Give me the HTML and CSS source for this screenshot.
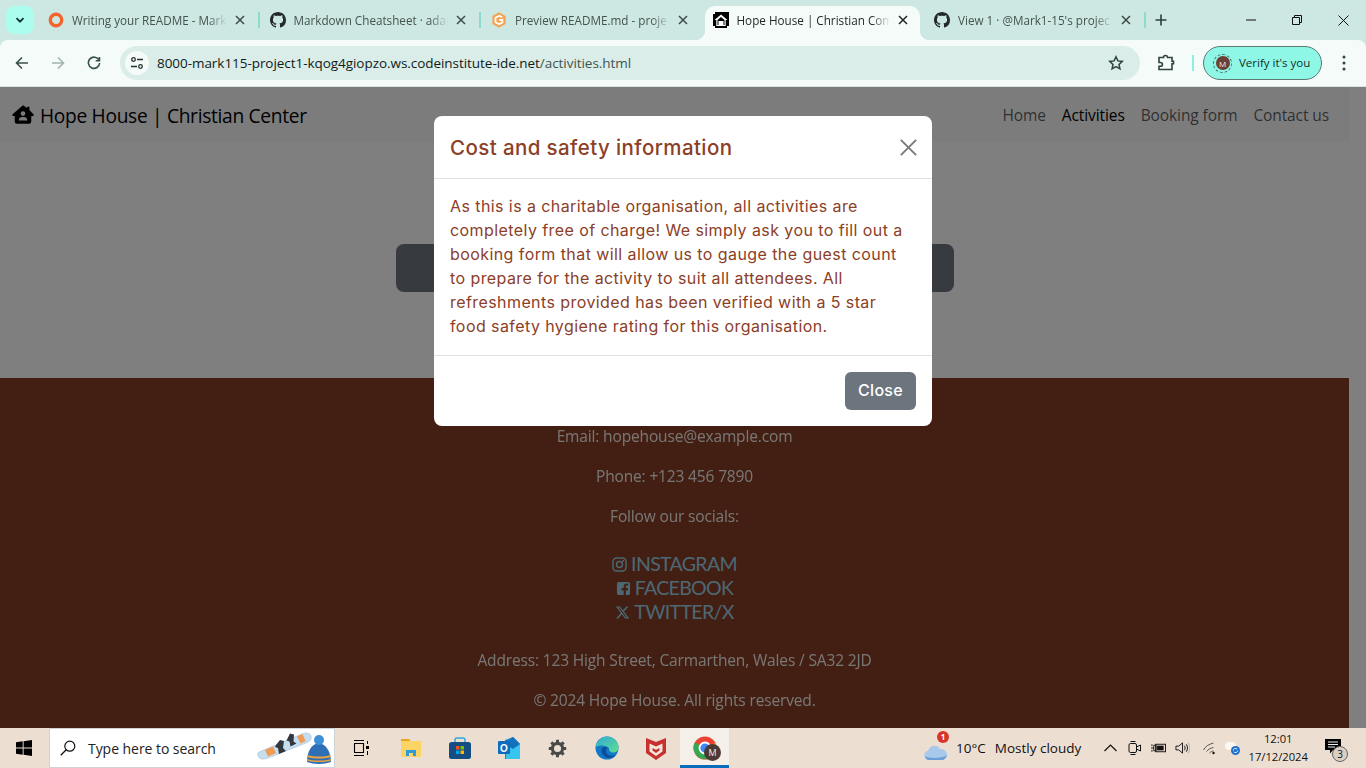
FILE: index.html
```html
<!DOCTYPE html>
<html lang="en">
<head>
<meta charset="utf-8">
<title>Hope House | Christian Center</title>
<link rel="stylesheet" href="styles.css">
</head>
<body>
<div class="tabstrip">
  <button class="tab-search"><svg class="ic10" viewBox="0 0 10 10"><path d="M1.5 3.2 5 6.7l3.5-3.5" fill="none" stroke="#14302b" stroke-width="1.8"/></svg></button>
  <div class="tab sep">
    <svg class="fav" viewBox="0 0 16 16"><circle cx="8" cy="8" r="5.7" fill="none" stroke="#f4622d" stroke-width="3.4"/></svg>
    <span class="tab-title">Writing your README - Mark</span>
    <svg class="tab-x" viewBox="0 0 10 10"><path d="M1 1l8 8M9 1l-8 8"/></svg>
  </div>
  <div class="tab sep">
    <svg class="fav" viewBox="0 0 16 16"><path fill="#24292f" d="M8 0C3.58 0 0 3.58 0 8c0 3.54 2.29 6.53 5.47 7.59.4.07.55-.17.55-.38 0-.19-.01-.82-.01-1.49-2.01.37-2.53-.49-2.69-.94-.09-.23-.48-.94-.82-1.13-.28-.15-.68-.52-.01-.53.63-.01 1.08.58 1.23.82.72 1.21 1.87.87 2.33.66.07-.52.28-.87.51-1.07-1.78-.2-3.64-.89-3.64-3.95 0-.87.31-1.59.82-2.15-.08-.2-.36-1.02.08-2.12 0 0 .67-.21 2.2.82.64-.18 1.32-.27 2-.27.68 0 1.36.09 2 .27 1.53-1.04 2.2-.82 2.2-.82.44 1.1.16 1.92.08 2.12.51.56.82 1.27.82 2.15 0 3.07-1.87 3.75-3.65 3.95.29.25.54.73.54 1.48 0 1.07-.01 1.93-.01 2.2 0 .21.15.46.55.38A8.013 8.013 0 0016 8c0-4.42-3.58-8-8-8z"/></svg>
    <span class="tab-title">Markdown Cheatsheet · adam</span>
    <svg class="tab-x" viewBox="0 0 10 10"><path d="M1 1l8 8M9 1l-8 8"/></svg>
  </div>
  <div class="tab">
    <svg class="fav" viewBox="0 0 16 16"><path fill="#f5a350" d="M8 .3l6.6 3.6v8.2L8 15.7 1.4 12.100V3.900z"/><path fill="none" stroke="#fff" stroke-width="1.8" d="M11.300 5.300 8.200 3.800 4.500 5.700v4.600l3.600 2 3.300-1.900V7.900H8.100"/></svg>
    <span class="tab-title">Preview README.md - proje</span>
    <svg class="tab-x" viewBox="0 0 10 10"><path d="M1 1l8 8M9 1l-8 8"/></svg>
  </div>
  <div class="tab tab-active">
    <svg class="fav" viewBox="0 0 16 16"><rect width="16" height="16" fill="#000"/><path fill="#fff" d="M8 2.500 1.500 8h1.800v6h9.400V8h1.800z"/><path fill="#000" d="M4.500 8 8 4.900 11.500 8v5h-7z"/><path fill="#fff" d="M5.500 9h5v4h-5z"/><path fill="#fff" d="M0 0h2v2H0zM14 14h2v2h-2zM0 14h2v2H0z"/></svg>
    <span class="tab-title">Hope House | Christian Com</span>
    <svg class="tab-x" viewBox="0 0 10 10"><path d="M1 1l8 8M9 1l-8 8"/></svg>
  </div>
  <div class="tab sep">
    <svg class="fav" viewBox="0 0 16 16"><path fill="#24292f" d="M8 0C3.58 0 0 3.58 0 8c0 3.54 2.29 6.53 5.47 7.59.4.07.55-.17.55-.38 0-.19-.01-.82-.01-1.49-2.01.37-2.53-.49-2.69-.94-.09-.23-.48-.94-.82-1.13-.28-.15-.68-.52-.01-.53.63-.01 1.08.58 1.23.82.72 1.21 1.87.87 2.33.66.07-.52.28-.87.51-1.07-1.78-.2-3.64-.89-3.64-3.95 0-.87.31-1.59.82-2.15-.08-.2-.36-1.02.08-2.12 0 0 .67-.21 2.2.82.64-.18 1.32-.27 2-.27.68 0 1.36.09 2 .27 1.53-1.04 2.2-.82 2.2-.82.44 1.1.16 1.92.08 2.12.51.56.82 1.27.82 2.15 0 3.07-1.87 3.75-3.65 3.95.29.25.54.73.54 1.48 0 1.07-.01 1.93-.01 2.2 0 .21.15.46.55.38A8.013 8.013 0 0016 8c0-4.42-3.58-8-8-8z"/></svg>
    <span class="tab-title">View 1 · @Mark1-15's projec</span>
    <svg class="tab-x" viewBox="0 0 10 10"><path d="M1 1l8 8M9 1l-8 8"/></svg>
  </div>
  <svg class="new-tab" viewBox="0 0 12 12"><path d="M6 .5v11M.5 6h11" stroke="#2b3f3b" stroke-width="1.600" fill="none"/></svg>
  <div class="win-controls">
    <div class="win-btn"><svg class="ic10" viewBox="0 0 10 10"><path d="M0 5h10" stroke="#111" fill="none"/></svg></div>
    <div class="win-btn"><svg class="ic10" viewBox="0 0 10 10"><path d="M.5 2.500h7v7h-7zM2.500 2.500v-2h7v7h-2" stroke="#111" fill="none"/></svg></div>
    <div class="win-btn"><svg class="ic11" viewBox="0 0 11 11"><path d="M.5.500l10 10M10.500.500l-10 10" stroke="#111" fill="none"/></svg></div>
  </div>
</div>

<div class="toolbar">
  <div class="nav-btn"><svg class="ic14" viewBox="0 0 14 14"><path d="M13 7H2M7 1.500 1.500 7 7 12.500" fill="none" stroke="#37504b" stroke-width="1.600"/></svg></div>
  <div class="nav-btn"><svg class="ic14" viewBox="0 0 14 14"><path d="M1 7h11M7 1.500 12.500 7 7 12.500" fill="none" stroke="#a3b3af" stroke-width="1.600"/></svg></div>
  <div class="nav-btn"><svg class="ic14" viewBox="0 0 14 14"><path d="M12 4.200A5.600 5.600 0 1 0 12.600 7M12.500 1v3.800H8.700" fill="none" stroke="#37504b" stroke-width="1.600"/></svg></div>
  <div class="omnibox">
    <div class="site-info"><svg class="ic14" viewBox="0 0 14 14"><g fill="none" stroke="#22332f" stroke-width="1.300"><circle cx="3.500" cy="3.500" r="1.800"/><path d="M7 3.500h6M1 10.500h6"/><circle cx="10.500" cy="10.500" r="1.800"/></g></svg></div>
    <div class="url">8000-mark115-project1-kqog4giopzo.ws.codeinstitute-ide.net<span class="url-path">/activities.html</span></div>
    <svg class="star" viewBox="0 0 16 16"><path d="M8 1.800l1.900 4.100 4.400.5-3.300 3 .9 4.400L8 11.600l-3.900 2.200.9-4.400-3.300-3 4.400-.5z" fill="none" stroke="#2d4440" stroke-width="1.500"/></svg>
  </div>
  <svg class="ext" viewBox="0 0 18 18"><path d="M2 4h4.500a2 2 0 0 1 4 0H15v3.700h1.500v2.600H15V16H2v-3.200h1.500a1.900 1.900 0 0 0 0-3.800H2z" transform="translate(0 -.5)" fill="none" stroke="#2d4440" stroke-width="1.600"/></svg>
  <div class="tool-sep"></div>
  <div class="verify">
    <span class="avatar-ring"><span class="avatar">M</span></span>
    <span>Verify it's you</span>
  </div>
  <svg class="kebab" viewBox="0 0 4 16"><g fill="#2d4440"><circle cx="2" cy="2" r="1.500"/><circle cx="2" cy="8" r="1.500"/><circle cx="2" cy="14" r="1.500"/></g></svg>
</div>

<div class="viewport">
  <div class="page">
    <nav class="navbar">
      <a class="brand">
        <svg class="brand-ic" viewBox="0 0 24 20"><path d="M12 0 .6 9.700c-.7.600-.3 1.800.7 1.800H3v6A2.500 2.500 0 0 0 5.500 20h13a2.500 2.500 0 0 0 2.500-2.500v-6h1.700c1 0 1.400-1.200.7-1.800L19 5V1.500h-2.500v1.400z"/><circle cx="12" cy="9" r="2.500" fill="#f8f9fa"/><path d="M7.300 16.500c0-2.400 2-3.700 3.500-3.700h2.400c1.500 0 3.500 1.300 3.500 3.700z" fill="#f8f9fa"/></svg>
        <span>Hope House | Christian Center</span>
      </a>
      <ul class="nav-links">
        <li>Home</li>
        <li class="current">Activities</li>
        <li>Booking form</li>
        <li>Contact us</li>
      </ul>
    </nav>
    <main class="main">
      <div class="dark-bar"></div>
    </main>
    <footer class="footer">
      <p>Email: hopehouse@example.com</p>
      <p>Phone: +123 456 7890</p>
      <p>Follow our socials:</p>
      <div class="socials">
        <a><svg class="soc-ic" viewBox="0 0 16 16"><rect x="1" y="1" width="14" height="14" rx="4" fill="none" stroke="currentColor" stroke-width="1.500"/><circle cx="8" cy="8" r="3.200" fill="none" stroke="currentColor" stroke-width="1.500"/><circle cx="12" cy="4" r="1" fill="currentColor"/></svg>INSTAGRAM</a>
        <a><svg class="soc-ic" viewBox="0 0 16 16"><path fill="currentColor" d="M3 1h10a2 2 0 0 1 2 2v10a2 2 0 0 1-2 2h-2.500v-5h2l.4-2.500h-2.400V6c0-.8.400-1.200 1.200-1.200h1.200V2.700c-2.800-.5-4.700.3-4.700 3v1.800H6V10h2.200v5H3a2 2 0 0 1-2-2V3a2 2 0 0 1 2-2z"/></svg>FACEBOOK</a>
        <a><svg class="soc-ic" viewBox="0 0 24 24"><path fill="currentColor" d="M18.244 2.250h3.308l-7.227 8.260 8.502 11.240H16.170l-5.214-6.817L4.990 21.750H1.680l7.730-8.835L1.254 2.250H8.080l4.713 6.231zm-1.161 17.520h1.833L7.084 4.126H5.117z"/></svg>TWITTER/X</a>
      </div>
      <p>Address: 123 High Street, Carmarthen, Wales / SA32 2JD</p>
      <p>© 2024 Hope House. All rights reserved.</p>
    </footer>
  </div>
  <div class="scroll-gutter"></div>
  <div class="backdrop"></div>
  <div class="modal">
    <header class="modal-head">
      <h5>Cost and safety information</h5>
      <svg class="modal-x" viewBox="0 0 16 16"><path d="M.8.800l14.400 14.400M15.200.800.800 15.200" fill="none" stroke="#7a7a7a" stroke-width="1.800"/></svg>
    </header>
    <div class="modal-body">As this is a charitable organisation, all activities are completely free of charge! We simply ask you to fill out a booking form that will allow us to gauge the guest count to prepare for the activity to suit all attendees. All refreshments provided has been verified with a 5 star food safety hygiene rating for this organisation.</div>
    <footer class="modal-foot"><button class="btn-close">Close</button></footer>
  </div>
</div>

<div class="taskbar">
  <div class="start"><svg class="ic16" viewBox="0 0 16 16"><path fill="#000" d="M0 2.300 6.700 1.300V7.500H0zM7.600 1.200 16 0v7.500H7.600zM0 8.400h6.700v6.300L0 13.700zM7.600 8.400H16V16l-8.400-1.200z"/></svg></div>
  <div class="search">
    <svg class="ic16" viewBox="0 0 16 16"><circle cx="9.800" cy="6.200" r="5" fill="none" stroke="#111" stroke-width="1.200"/><path d="M6.200 9.800.8 15.200" stroke="#111" stroke-width="1.300"/></svg>
    <span class="search-text">Type here to search</span>
    <svg class="doodle" viewBox="0 0 76 34">
      <path d="M3 21 46 3c4-2 8-1 9 2 1 3-1 5-4 6.500L12 27c-5 2-9 1-10-2-.6-2-.6-3 1-4z" fill="#c5dff0" stroke="#a3bed2" stroke-width=".6"/>
      <path d="M9 19l8-3.500 3 6.500-8 3.500zM41 5.500l5.500-2.500 3 7-5 2.500z" fill="#ef9a55"/>
      <path d="M20 14l4-5 4 1-1 7 3 3-7 3-1-6-3-1zM31 8.500l3-6 4 1-.5 7 3 2-6 3-1-5-3-1z" fill="#33383e"/>
      <path d="M51 31c0-10 4-18 12-19 7 1 12 9 12 19-7 2.500-17 2.500-24 0z" fill="#2f6fb5"/>
      <circle cx="63" cy="9" r="5" fill="#3d8fd6"/>
      <path d="M51.500 24c7 2 16 2 23 0l.3 2c-7 2-17 2-23.800 0zM51 28c7 2 17 2 24 0v1.500c-7 2-17 2-24 0z" fill="#eda23d"/>
    </svg>
  </div>
  <div class="task task-view"><svg class="ic16" viewBox="0 0 16 16"><path d="M1 .5h10M1 15.500h10M1.500 3.500h9v9h-9z" fill="none" stroke="#000" stroke-width="1.100"/><rect x="13" y="6" width="3" height="3" fill="#000"/><path d="M14.500 1v3M14.500 11v4" stroke="#000"/></svg></div>
  <div class="task"><svg class="ic24" viewBox="0 0 24 24"><path d="M2 3h8l2 2.500H2z" fill="#e6a71f"/><path d="M2 5h20v15a1 1 0 0 1-1 1H3a1 1 0 0 1-1-1z" fill="#fbd466"/><path d="M7 20v-6h10v6h-3v-3h-4v3z" fill="#2e9ad8"/></svg></div>
  <div class="task"><svg class="ic24" viewBox="0 0 24 24"><path d="M7 7V4a2 2 0 0 1 2-2h6a2 2 0 0 1 2 2v3" fill="none" stroke="#2fa8e0" stroke-width="1.500"/><rect x="1" y="6" width="22" height="17" rx="2.500" fill="#154d83"/><path d="M8 10h3.500v3.500H8z" fill="#f25022"/><path d="M12.500 10H16v3.500h-3.500z" fill="#7fba00"/><path d="M8 14.500h3.500V18H8z" fill="#00a4ef"/><path d="M12.500 14.500H16V18h-3.500z" fill="#ffb900"/></svg></div>
  <div class="task"><svg class="ic24" viewBox="0 0 24 24"><path d="M8 4 16 1l7 7v13a2 2 0 0 1-2 2H8z" fill="#1481cf"/><path d="M9 9l14-2v14a2 2 0 0 1-2 2H9z" fill="#35c5ee"/><path d="M16 1l7 7-7 5-8-5z" fill="#1271bd"/><rect x="1" y="5" width="12" height="13" rx="1" fill="#0f6cbd"/><text class="outlook-o" x="7" y="15.500">O</text></svg></div>
  <div class="task"><svg class="ic18" viewBox="0 0 24 24"><circle cx="12" cy="12" r="6.500" fill="none" stroke="#4a4a4a" stroke-width="4"/><g stroke="#4a4a4a" stroke-width="3.800"><path d="M12 1v4M12 19v4M1 12h4M19 12h4M4.200 4.200l2.800 2.800M17 17l2.800 2.800M19.800 4.200 17 7M7 17l-2.800 2.800"/></g></svg></div>
  <div class="task"><svg class="ic24" viewBox="0 0 24 24"><defs><linearGradient id="edgeTop" x1="0" y1="0" x2="1" y2="1"><stop offset="0" stop-color="#2fa9d8"/><stop offset="1" stop-color="#5fe08a"/></linearGradient></defs><circle cx="12" cy="12" r="11.500" fill="#1277c9"/><path d="M.6 11C1.500 5 6.500.5 12 .5c6.500 0 11.500 5 11.500 11 0 3.500-3 5.500-6 5-2.500-.4-4-2.300-3.500-4.500C11 9 5 8.500.6 11z" fill="url(#edgeTop)"/><path d="M6.500 14c0 4 3 7.500 7 8 2.500.2 5-1 7-3-4 1.500-9 .5-9.500-3.500-.2-1.700.5-3 2-3.800C10 10.500 6.500 11 6.500 14z" fill="#0b4f9a"/></svg></div>
  <div class="task"><svg class="ic24" viewBox="0 0 22 24"><path d="M1 2l10 4 10-4v15l-10 7-10-7z" fill="#c8302f"/><path d="M4.500 7.500l6.500 3 6.500-3v8l-6.500 4.500-6.500-4.500z" fill="#f0e6da"/><path d="M7.500 12l3.500 1.800 3.500-1.800v2.500L11 17l-3.500-2.500z" fill="#c8302f"/></svg></div>
  <div class="task task-current">
    <svg class="ic24" viewBox="0 0 24 24"><circle cx="12" cy="12" r="11.500" fill="#ea4335"/><path d="M12 12 22.500 7a11.500 11.500 0 0 1-8 16z" fill="#fbbc05"/><path d="M12 12 14.500 23A11.500 11.500 0 0 1 1.800 6.500z" fill="#34a853"/><circle cx="12" cy="12" r="5.500" fill="#4285f4" stroke="#fff" stroke-width="1.800"/></svg>
    <span class="task-avatar">M</span>
  </div>
  <div class="weather">
    <span class="weather-ic">
      <svg class="ic24w" viewBox="0 0 26 20"><path d="M6 19a5 5 0 0 1-.8-9.900A7 7 0 0 1 18 7.500a5.700 5.700 0 0 1 2.500 11.500z" fill="#a9c9ec"/><path d="M2 15c4 2 16 3 23-1-1 3-3 5-5 5H6c-2 0-3.500-2-4-4z" fill="#6d9fd6"/></svg>
      <span class="badge">1</span>
    </span>
    <span class="temp">10°C</span>
    <span>Mostly cloudy</span>
  </div>
  <div class="tray">
    <svg class="tray-ic" viewBox="0 0 14 14"><path d="M1 10l6-6 6 6" fill="none" stroke="#111" stroke-width="1.200"/></svg>
    <svg class="tray-ic" viewBox="0 0 14 14"><rect x="1.500" y="2.500" width="7.500" height="9" rx="1.500" fill="none" stroke="#111"/><path d="M9 6l4-2v6L9 8" fill="none" stroke="#111"/><path d="M3 .5h5M3 13.500h5" stroke="#111"/></svg>
    <svg class="tray-ic" viewBox="0 0 16 14"><rect x="5" y="3" width="10.500" height="8" fill="none" stroke="#111"/><rect x="6.500" y="4.500" width="7" height="5" fill="#111"/><path d="M0 7h3M3 4h2.500v6H3zM1 3v2M1 9v2" stroke="#111" fill="none"/></svg>
    <svg class="tray-ic" viewBox="0 0 16 14"><path d="M1 5h3l4-3.500v11L4 9H1z" fill="none" stroke="#111"/><path d="M10 4.500c1 1.500 1 3.500 0 5M12 3c1.800 2.500 1.800 5.500 0 8" fill="none" stroke="#111"/><path d="M14 1.500c2.300 3.300 2.300 7.700 0 11" fill="none" stroke="#aaa"/></svg>
  </div>
  <div class="net">
    <svg class="tray-ic" viewBox="0 0 14 14"><path d="M1 9c2-4 6-6 10-7M4 10.500c1.500-2 4-3.500 7-4M7 12c1-1 2.500-2 4-2" fill="none" stroke="#555"/><circle cx="11" cy="12" r="1.200" fill="#111"/></svg>
    <span class="sync"><span class="sync-cloud"></span><svg class="sync-ic" viewBox="0 0 10 10"><circle cx="5" cy="5" r="5" fill="#1a6fd0"/><path d="M2.500 5a2.500 2.500 0 0 1 4.400-1.500M7.500 5a2.500 2.500 0 0 1-4.400 1.500" fill="none" stroke="#fff"/></svg></span>
  </div>
  <div class="clock"><span>12:01</span><span>17/12/2024</span></div>
  <div class="notif">
    <svg class="notif-ic" viewBox="0 0 16 15"><path d="M0 0h16v11H8l-3 3.500V11H0z" fill="#000"/><path d="M3 3h10M3 5.500h10M3 8h7" stroke="#eee"/></svg>
    <span class="notif-count">3</span>
  </div>
</div>
</body>
</html>
```
FILE: styles.css
```css
* { box-sizing: border-box; }
html, body { margin: 0; height: 768px; overflow: hidden; }
body { width: 1366px; background: #cde8e2; font-family: "Open Sans", "Noto Sans", sans-serif; display: flex; flex-direction: column; }
svg { display: block; flex: none; }
p { margin: 0; }
.ic10 { width: 10px; height: 10px; }
.ic11 { width: 11px; height: 11px; }
.ic14 { width: 14px; height: 14px; }
.ic16 { width: 16px; height: 16px; }
.ic18 { width: 19px; height: 19px; }
.ic24 { width: 24px; height: 24px; }

/* tab strip */
.tabstrip { height: 40px; display: flex; align-items: flex-start; padding-left: 6px; }
.tab-search { width: 28px; height: 28px; margin: 6px 6px 0 0; border: 0; padding: 0; border-radius: 8px; background: #adfdee; display: flex; align-items: center; justify-content: center; }
.tab { position: relative; width: 221.5px; height: 34px; margin-top: 6px; padding: 0 14px 6px 8px; display: flex; align-items: center; gap: 8px; font-size: 11.7px; color: #46524f; }
.fav { width: 16px; height: 16px; }
.tab-title { flex: 1; min-width: 0; white-space: nowrap; overflow: hidden; -webkit-mask-image: linear-gradient(90deg, #000 88%, transparent 100%); mask-image: linear-gradient(90deg, #000 88%, transparent 100%); }
.tab-x { width: 10px; height: 10px; margin-right: 3px; fill: none; stroke: #3c4a47; stroke-width: 1.500; }
.sep::after { content: ""; position: absolute; right: 2px; top: 6px; width: 2px; height: 16px; background: #8cdccd; }
.tab-active { background: #f4fbf8; border-radius: 10px 10px 0 0; color: #1c2725; width: 215px; padding-right: 8px; margin-right: 6.500px; }
.tab-active .tab-x { stroke: #1c2725; margin-right: 4px; }
.tab-active::before, .tab-active::after { content: ""; position: absolute; bottom: 0; width: 10px; height: 10px; }
.tab-active::before { left: -10px; background: radial-gradient(circle at 0 0, transparent 10px, #f4fbf8 10.500px); }
.tab-active::after { right: -10px; background: radial-gradient(circle at 100% 0, transparent 10px, #f4fbf8 10.500px); }
.new-tab { width: 12px; height: 12px; margin: 14px 0 0 7px; }
.win-controls { margin-left: auto; display: flex; }
.win-btn { width: 46px; height: 40px; display: flex; align-items: center; justify-content: center; }

/* toolbar */
.toolbar { height: 47px; background: #f4fbf8; border-radius: 8px 8px 0 0; border-bottom: 1px solid #d9e4e1; padding: 6px 0 6px 4px; display: flex; align-items: center; }
.nav-btn { width: 36px; height: 34px; display: flex; align-items: center; justify-content: center; }
.omnibox { width: 1020px; height: 34px; margin-left: 8px; border-radius: 17px; background: #daede8; display: flex; align-items: center; padding: 0 16px 0 5px; }
.site-info { width: 24px; height: 24px; border-radius: 50%; background: #f4fbf8; display: flex; align-items: center; justify-content: center; }
.url { flex: 1; margin-left: 8px; font-size: 13.5px; letter-spacing: -.05px; color: #111c1a; white-space: nowrap; }
.url-path { color: #3f5450; }
.star { width: 16px; height: 16px; }
.ext { width: 18px; height: 18px; margin-left: 17px; }
.tool-sep { width: 2px; height: 16px; margin: 0 9px 0 17px; background: #8ff0df; }
.verify { width: 119px; height: 34px; border-radius: 17px; background: #8ff7e6; border: 1px solid #5e7a75; display: flex; align-items: center; gap: 7px; padding: 0 0 2px 9px; font-size: 11.5px; color: #10302a; }
.avatar-ring { width: 19px; height: 19px; margin-top: 2px; border-radius: 50%; border: 1px dashed #3b6a62; display: flex; align-items: center; justify-content: center; }
.avatar { width: 14px; height: 14px; border-radius: 50%; background: #6b3f33; color: #eee; font-size: 8px; display: flex; align-items: center; justify-content: center; }
.kebab { width: 4px; height: 16px; margin-left: 20px; }

/* page */
.viewport { position: relative; height: 641px; display: flex; background: #fff; overflow: hidden; }
.page { width: 1349px; display: flex; flex-direction: column; }
.scroll-gutter { width: 17px; background: #fff; }
.navbar { height: 55px; background: #f8f9fa; display: flex; align-items: center; justify-content: space-between; padding: 0 12px; }
.brand { display: flex; align-items: center; gap: 6px; padding-top: 1px; font-size: 19.2px; letter-spacing: -.32px; color: #000; }
.brand-ic { width: 22px; height: 19px; margin-top: -1px; fill: #000; }
.nav-links { list-style: none; margin: 0; padding: 0 8px 0 0; display: flex; gap: 16px; font-size: 15.5px; letter-spacing: -.1px; color: rgba(0,0,0,.65); }
.current { color: #000; }
.main { flex: 1; display: flex; align-items: flex-start; justify-content: center; padding-top: 102px; padding-left: 1px; }
.dark-bar { width: 558px; height: 48px; border-radius: 8px; background: #6e747c; }
.footer { height: 350px; background: #843e25; padding-top: 46px; text-align: center; font-size: 15.5px; line-height: 24px; letter-spacing: -.15px; color: #fff; display: flex; flex-direction: column; gap: 16px; }
.footer p { opacity: .9; }
.socials { margin: 8px 0; display: flex; flex-direction: column; align-items: center; font-family: "Lato", sans-serif; font-size: 19.5px; letter-spacing: -.65px; color: #9ad0e6; }
.socials a { display: flex; align-items: center; gap: 4px; }
.soc-ic { width: 15px; height: 15px; }
.backdrop { position: absolute; inset: 0; background: rgba(0,0,0,.5); }
.modal { position: absolute; left: 434px; top: 29px; width: 498px; height: 310px; background: #fff; border-radius: 8px; color: #8b4027; font-family: "Inter", "Lato", sans-serif; display: flex; flex-direction: column; }
.modal-head { height: 63px; border-bottom: 1px solid #dee2e6; display: flex; align-items: center; justify-content: space-between; padding: 1px 16px 0; }
.modal-head h5 { margin: 0; font-size: 20.5px; font-weight: 500; line-height: 30px; letter-spacing: .4px; }
.modal-x { width: 17px; height: 17px; margin: -1px -1px 0 0; }
.modal-body { height: 176px; padding: 15px 16px 0; font-size: 16px; line-height: 24px; letter-spacing: .42px; }
.modal-foot { flex: 1; border-top: 1px solid #dee2e6; display: flex; align-items: center; justify-content: flex-end; padding: 0 16px; }
.btn-close { width: 71px; height: 38px; border: 0; border-radius: 6px; padding: 0 0 2px; background: #6c757d; color: #fff; font: 500 16px "Inter", sans-serif; letter-spacing: .3px; }

/* taskbar */
.taskbar { height: 40px; background: #ecdfd1; display: flex; align-items: center; color: #111; font-size: 13px; }
.start { width: 49px; display: flex; justify-content: center; padding-right: 1px; }
.search { width: 286px; height: 40px; background: #fff; border: 1px solid #cfd3d6; display: flex; align-items: center; padding-left: 10px; font-size: 14px; color: #222; }
.search-text { margin-left: 12px; letter-spacing: -.05px; }
.doodle { width: 76px; height: 34px; margin-left: auto; margin-right: 2px; }
.task { width: 49px; height: 40px; display: flex; align-items: center; justify-content: center; position: relative; }
.task-view { width: 51px; }
.outlook-o { font: 700 10px "Liberation Sans", sans-serif; fill: #fff; text-anchor: middle; }
.task-current { background: #f5efe9; border-bottom: 3px solid #0a6cbd; padding-top: 3px; }
.task-avatar { position: absolute; left: 24px; top: 16px; width: 17px; height: 17px; border-radius: 50%; background: #4b3a35; color: #eee; font-size: 9px; display: flex; align-items: center; justify-content: center; }
.weather { margin-left: 194px; display: flex; align-items: center; gap: 8px; font-size: 13.5px; }
.weather-ic { position: relative; display: block; }
.ic24w { width: 25px; height: 19px; margin-top: 6px; }
.badge { position: absolute; right: -1px; top: -5px; width: 12px; height: 12px; border-radius: 50%; background: #d8352a; color: #fff; font-size: 8px; font-weight: 700; display: flex; align-items: center; justify-content: center; }
.temp { margin-right: 1px; }
.tray { margin-left: 22px; display: flex; align-items: center; gap: 9px; }
.tray-ic { width: 15px; height: 14px; }
.net { margin-left: 12px; display: flex; align-items: center; gap: 8px; }
.sync { position: relative; display: block; width: 15px; height: 14px; }
.sync-cloud { position: absolute; left: 0; top: 1px; width: 11px; height: 8px; border-radius: 5px; background: #fbf8f3; }
.sync-ic { position: absolute; right: 0; bottom: 0; width: 9px; height: 9px; }
.clock { width: 72px; margin-left: 2px; display: flex; flex-direction: column; align-items: center; font-size: 11.2px; line-height: 18px; }
.notif { position: relative; margin-left: 11px; width: 22px; height: 24px; }
.notif-ic { width: 16px; height: 15px; margin-top: 3px; }
.notif-count { position: absolute; left: 7px; top: 10px; width: 16px; height: 16px; border-radius: 50%; background: #d8cfc5; border: 1px solid #666; font-size: 10px; display: flex; align-items: center; justify-content: center; }
```
